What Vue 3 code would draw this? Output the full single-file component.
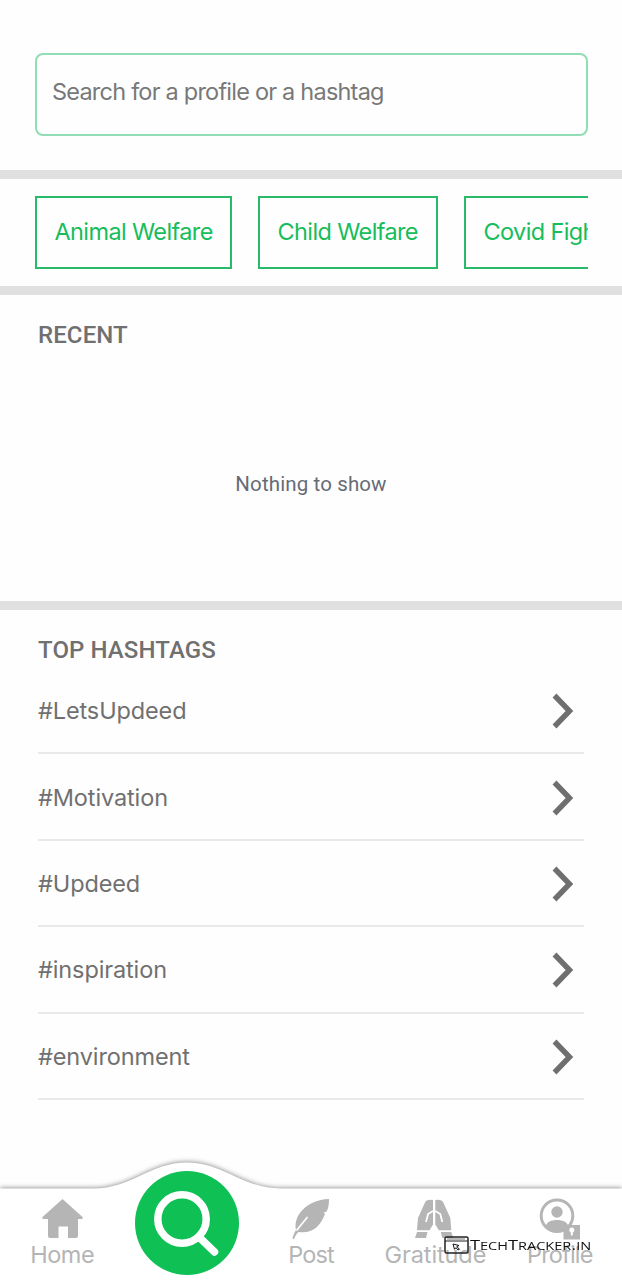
<script setup>
const categories = ['Animal Welfare', 'Child Welfare', 'Covid Fighters']
const hashtags = ['#LetsUpdeed', '#Motivation', '#Updeed', '#inspiration', '#environment']
</script>

<template>
  <div class="screen">
    <header class="search-area">
      <div class="search-box"><span class="placeholder">Search for a profile or a hashtag</span></div>
    </header>

    <div class="categories">
      <div class="chips">
        <div v-for="(c, i) in categories" :key="c" class="chip" :class="'chip-' + i"><span>{{ c }}</span></div>
      </div>
    </div>

    <section class="recent">
      <h2 class="recent-title">RECENT</h2>
      <p><span>Nothing to show</span></p>
    </section>

    <section class="top">
      <h2><span>TOP HASHTAGS</span></h2>
      <ul>
        <li v-for="h in hashtags" :key="h">
          <span>{{ h }}</span>
          <svg width="22" height="36" viewBox="0 0 22 36"><path d="M2.500 2.500 17.500 18 2.500 33.500" fill="none" stroke="#6f6f6f" stroke-width="5.400" /></svg>
        </li>
      </ul>
    </section>

    <nav class="bottom">
      <svg class="curve" width="622" height="130" viewBox="0 0 622 130">
        <defs>
          <filter id="shade" x="-5%" y="-20%" width="110%" height="140%"><feGaussianBlur stdDeviation="2.6" /></filter>
        </defs>
        <path d="M0 38H93C132 38 150 12 187 12S242 38 281 38H622V140H0Z" fill="#888" filter="url(#shade)" />
        <path d="M0 38.500H93C132 38.500 150 12.500 187 12.500S242 38.500 281 38.500H622V130H0Z" fill="#fff" />
      </svg>
      <div class="tabs">
        <div class="tab home">
          <svg width="44" height="42" viewBox="0 0 44 42"><path d="M22.500 1 42.500 19Q43.500 21 41 21H38V38Q38 40 36 40H28V28.500H18.500V40H10Q8 40 8 38V21H4Q1.500 21 2.500 19Z" fill="#b5b5b5" /></svg>
          <span>Home</span>
        </div>
        <div class="tab search">
          <svg width="104" height="104" viewBox="0 0 104 104"><circle cx="52" cy="52" r="52" fill="#0fc055" /><circle cx="47" cy="48" r="24.200" fill="none" stroke="#fff" stroke-width="7.500" /><path d="M64 66 79.500 81" stroke="#fff" stroke-width="7.500" stroke-linecap="round" /></svg>
        </div>
        <div class="tab post">
          <svg width="44" height="42" viewBox="0 0 44 42"><path d="M3.500 41C4 37 5.500 34.500 7 32C4 18 17 2 40 1C40 7 39 12 37 14L34.500 14.500 36 16C31 29 23 36 9.500 34C7 36 6 39 5 41Z" fill="#b5b5b5" /><path d="M7.500 32.500 18.500 19" stroke="#fff" stroke-width="1.700" /></svg>
          <span>Post</span>
        </div>
        <div class="tab gratitude">
          <svg width="44" height="42" viewBox="0 0 44 42"><g fill="#b5b5b5"><path d="M20 2V26.500L16.500 32.300H4L5 20 12 4.500Q13.500 1 20 2Z" /><path d="M22.300 2V26.500L25.800 32.300H38.300L37.300 20 30.300 4.500Q28.800 1 22.300 2Z" /><path d="M4 34H14.500L13 40H2ZM27.800 34H38.300L40.300 40H29.300Z" /></g><path d="M13 24 15 16 20 13M29.300 24 27.300 16 22.300 13" stroke="#fff" stroke-width="1.800" fill="none" /></svg>
          <span>Gratitude</span>
        </div>
        <div class="tab profile">
          <svg width="44" height="42" viewBox="0 0 44 42"><circle cx="19" cy="17.700" r="15.800" fill="none" stroke="#b5b5b5" stroke-width="3" /><circle cx="19" cy="14" r="5.700" fill="#b5b5b5" /><path d="M8 28C8.500 20 29.500 20 30 28Q19 38 8 28Z" fill="#b5b5b5" /><path d="M25.500 27H42V41.500H25.500Z" fill="#b5b5b5" /><circle cx="33.800" cy="32" r="2.500" fill="#fff" /><path d="M32.800 33H34.800V37.500H32.800Z" fill="#fff" /></svg>
          <span>Profile</span>
        </div>
      </div>
      <div class="watermark">
        <svg width="25" height="19" viewBox="0 0 25 19"><rect x="1" y="1" width="23" height="16" rx="1.500" fill="none" stroke="#222" stroke-width="1.500" /><path d="M1 5H24" stroke="#222" /><path d="M3 3H21" stroke="#777" /><path d="M9 8 15 9.500 12.800 10.600 15.500 13.300 14 14 12 11.700 10.500 13.300Z" fill="none" stroke="#111" /></svg>
        <span>T<small>ECH</small>T<small>RACKER</small>.<small>IN</small></span>
      </div>
    </nav>
  </div>
</template>

<style>
body { margin: 0; background: #fefefe; }
</style>

<style scoped>
* { box-sizing: border-box; }
.screen { width: 622px; height: 1280px; display: flex; flex-direction: column; overflow: hidden; background: #fefefe; font-family: "Inter", "Liberation Sans", sans-serif; color: #707070; }
.search-area { height: 179px; padding: 53px 34px 0 35px; border-bottom: 9px solid #e0e0e0; }
.search-box { height: 83px; border: 2px solid #91ddb4; border-radius: 8px; padding: 22px 15px; font-size: 23.5px; line-height: 30px; color: #787878; white-space: nowrap; }
.placeholder { letter-spacing: -0.78px; }
.categories { height: 116px; padding: 17px 34px 0 35px; border-bottom: 9px solid #e0e0e0; }
.chips { display: flex; gap: 26px; overflow: hidden; }
.chip { flex: none; height: 73px; border: 2px solid #28b969; padding: 19px 17.5px; font-size: 23.5px; line-height: 30px; color: #16bd5b; white-space: nowrap; letter-spacing: -0.62px; }
.chip-0 { width: 197px; }
.chip-1 { width: 180px; }
.chip-2 { width: 200px; }
h2 { margin: 0; font: 500 24px/30px Roboto, sans-serif; color: #707070; letter-spacing: 0.1px; }
.recent { height: 315px; padding: 25px 38px 0; border-bottom: 9px solid #e0e0e0; }
.recent p { margin: 119px 0 0; text-align: center; font: 400 20.5px/30px Roboto, sans-serif; letter-spacing: 0.12px; color: #666b76; }
.top { flex: 1; padding: 25px 38px 0; }
ul { list-style: none; margin: 3px 0 0; padding: 0; }
li { height: 86.4px; border-bottom: 2px solid #e9e9e9; display: flex; justify-content: space-between; align-items: center; padding: 2px 10px 0 0; font-size: 23.5px; line-height: 30px; letter-spacing: -0.12px; }
.bottom { position: relative; height: 130px; flex: none; }
.curve { position: absolute; inset: 0; }
.tabs { position: relative; height: 130px; display: grid; grid-template-columns: repeat(5, 1fr); }
.tab { display: flex; flex-direction: column; align-items: center; padding-top: 48px; color: #b5b5b5; font-size: 23.5px; line-height: 30px; letter-spacing: -0.5px; }
.tab svg { display: block; flex: none; }
.tab.search { padding-top: 21px; }
.tab.post { letter-spacing: -0.9px; }
.tab.gratitude { letter-spacing: -0.1px; }
.tab.profile { letter-spacing: -0.85px; }
.watermark { position: absolute; left: 444px; top: 85px; display: flex; align-items: center; gap: 1px; font: 14px/19px "Open Sans", sans-serif; color: #111; white-space: nowrap; }
.watermark span { transform: scaleX(1.3); transform-origin: 0 50%; }
.watermark small { font-size: 11.2px; }
</style>
